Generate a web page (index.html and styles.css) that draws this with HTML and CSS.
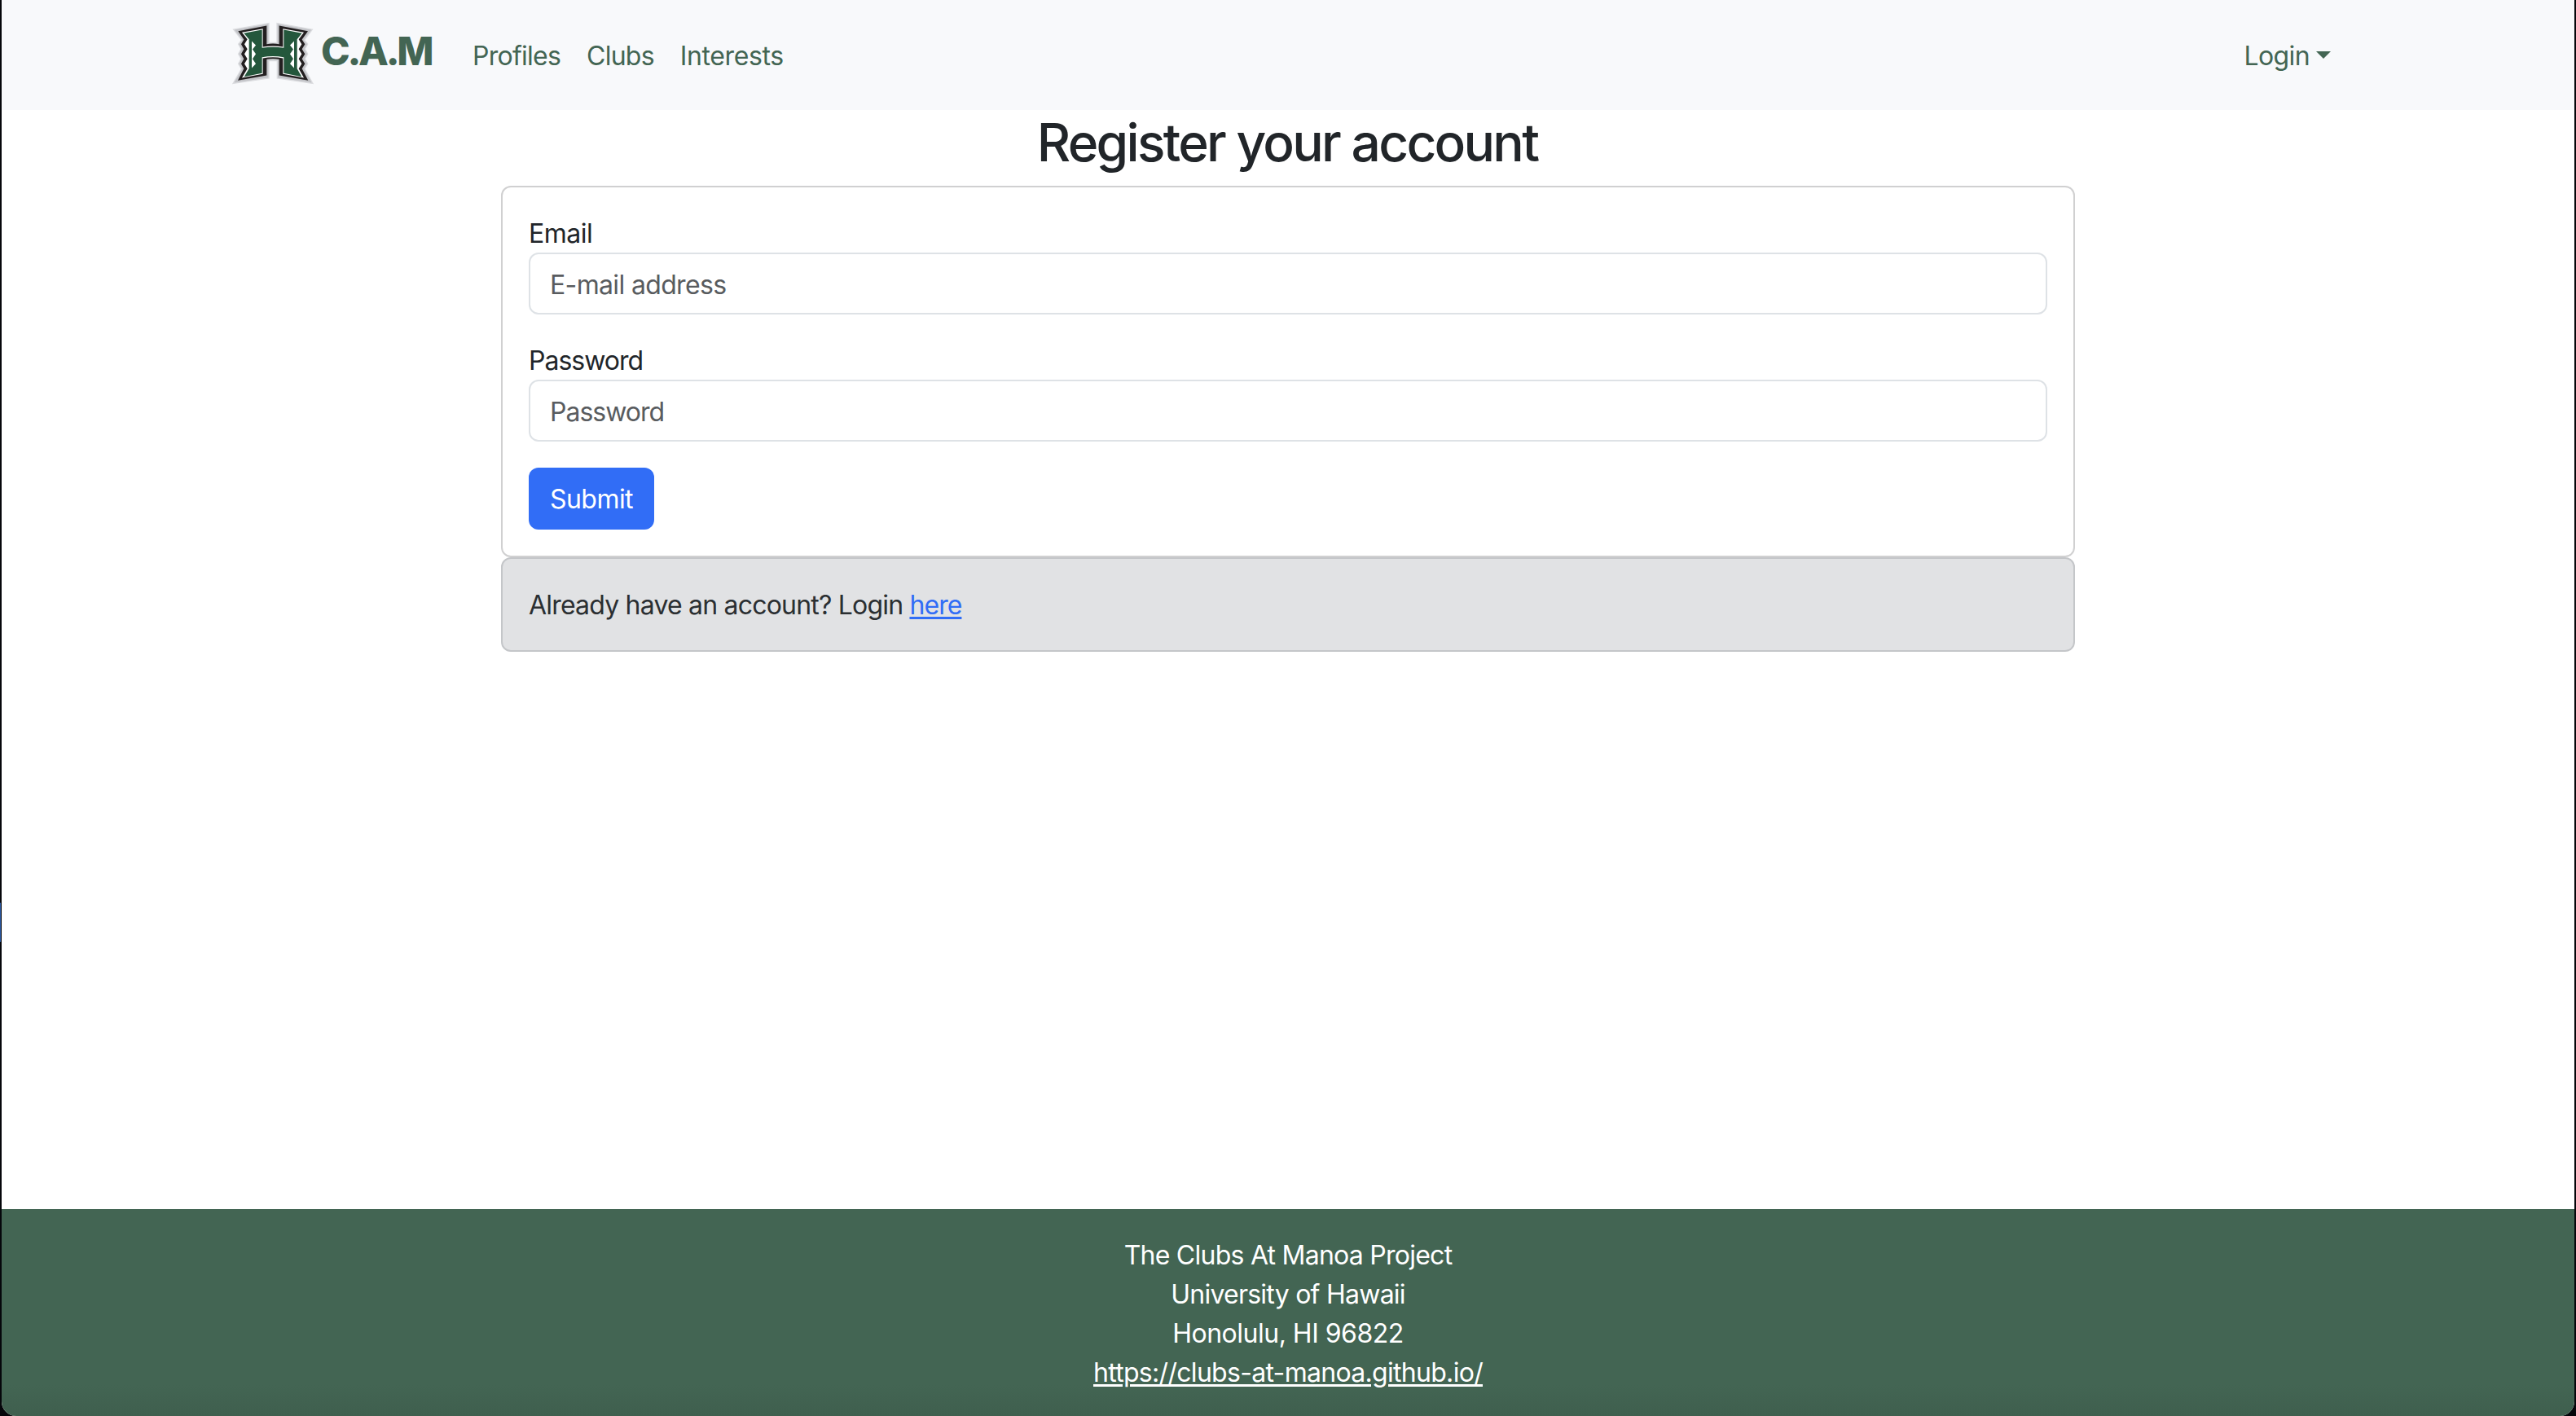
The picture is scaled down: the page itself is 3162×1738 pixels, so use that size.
FILE: index.html
```html
<!DOCTYPE html>
<html lang="en">
<head>
<meta charset="utf-8">
<title>C.A.M - Register</title>
<link rel="stylesheet" href="styles.css">
</head>
<body>
<div class="window">
  <nav class="navbar">
    <a class="brand" href="#">
      <svg class="brand-logo" viewBox="45 50 300 230" aria-hidden="true">
        <path class="logo-halo" d="M50 77 L180 54 V126 H210 V54 L340 77 L320 104 L311 116 L323 131 L313 149 L323 167 L313 185 L323 203 L312 222 L322 240 L342 276 L211 256 V192 H180 V256 L48 276 L69 240 L79 222 L68 203 L78 185 L68 167 L78 149 L68 131 L80 116 Z"/>
        <path class="logo-black" d="M67 83 L172 63 V131 Q195 127 218 131 V63 L324 83 L302 114 L313 131 L302 149 L313 167 L302 185 L313 203 L302 221 L325 265 L218 246 V187 Q195 182 172 187 V246 L66 265 L88 221 L78 203 L88 185 L78 167 L88 149 L78 131 L88 114 Z"/>
        <path class="logo-white" d="M81 88 L158 74 V141 Q195 135 232 141 V74 L309 88 L290 113 L301 131 L290 149 L301 167 L290 185 L301 203 L290 221 L309 255 L232 241 V183 Q195 176 158 183 V241 L81 255 L101 221 L90 203 L101 185 L90 167 L101 149 L90 131 L101 113 Z"/>
        <path class="logo-green" d="M88 91 L155 78 V145 Q195 138 235 145 V78 L302 91 L284 113 V221 L301 251 L235 238 V179 Q195 172 155 179 V238 L89 251 L107 221 V113 Z"/>
        <path class="logo-teeth" d="M117 120 L132 135 L120 150 L132 167 L120 185 L132 203 L117 219 Z M273 120 L258 135 L270 150 L258 167 L270 185 L258 203 L273 219 Z"/>
      </svg>
      <span class="brand-name">C.A.M</span>
    </a>
    <div class="nav-links">
      <a class="nav-link" href="#">Profiles</a>
      <a class="nav-link" href="#">Clubs</a>
      <a class="nav-link nav-link-wide" href="#">Interests</a>
    </div>
    <a class="nav-link login" href="#"><span>Login</span><span class="caret"></span></a>
  </nav>

  <main class="content">
    <h2 class="title">Register your account</h2>
    <form class="card">
      <label class="label" for="email">Email</label>
      <input class="input" id="email" type="email" placeholder="E-mail address">
      <label class="label label-tight" for="password">Password</label>
      <input class="input input-tight" id="password" type="password" placeholder="Password">
      <button class="submit" type="button">Submit</button>
    </form>
    <div class="card card-muted"><span>Already have an account? Login <a class="link" href="#">here</a></span></div>
  </main>

  <footer class="footer">
    <span>The Clubs At Manoa Project</span>
    <span>University of Hawaii</span>
    <span class="zip">Honolulu, HI 96822</span>
    <a class="footer-link" href="#">https://clubs-at-manoa.github.io/</a>
  </footer>
</div>
<div class="edge-accent"></div>
</body>
</html>
```
FILE: styles.css
```css
* { box-sizing: border-box; }

body {
  margin: 0;
  height: 1738px;
  overflow: hidden;
  padding: 0 2px;
  background: #05060a;
  color: #212529;
  font-family: Inter, "Liberation Sans", sans-serif;
  font-size: 32px;
  line-height: 48px;
  letter-spacing: -0.75px;
}

.window {
  display: flex;
  flex-direction: column;
  height: 1738px;
  background: #fff;
  border-radius: 0 0 18px 18px;
  overflow: hidden;
}

.navbar {
  display: flex;
  align-items: flex-start;
  height: 135px;
  padding: 27px 299px 0 283px;
  background: #f8f9fb;
}

.brand {
  display: flex;
  color: #436553;
  text-decoration: none;
}

.brand-logo { width: 100px; height: 77px; }
.logo-halo { fill: #c3c4c8; stroke: #dcdde0; stroke-width: 4; }
.logo-black { fill: #231f20; }
.logo-white, .logo-teeth { fill: #fff; }
.logo-green { fill: #24573c; }

.brand-name {
  width: 137px;
  margin-left: 9px;
  font-size: 48px;
  font-weight: 800;
  letter-spacing: -3.3px;
  line-height: 72px;
}

.nav-links {
  display: flex;
  gap: 32px;
  margin-left: 49px;
}

.nav-link {
  margin-top: 18px;
  color: #436553;
  text-decoration: none;
}

.nav-link-wide { letter-spacing: -0.4px; }

.login {
  display: flex;
  margin-left: auto;
  letter-spacing: -0.6px;
}

.caret {
  margin: 18px 0 0 8px;
  width: 18px;
  height: 9px;
  background: #436553;
  clip-path: polygon(0 0, 100% 0, 50% 100%);
}

.content {
  flex: 1;
  width: 1932px;
  margin: 0 auto;
}

.title {
  margin: 0 0 15px;
  padding: 1px 2px 0 0;
  font-size: 64px;
  font-weight: 550;
  line-height: 77px;
  letter-spacing: -2.7px;
  text-align: center;
}

.card {
  display: flex;
  flex-direction: column;
  padding: 32px;
  border: 2px solid #d0d0d1;
  border-radius: 12px;
}

.card-muted {
  height: 116px;
  padding-top: 33px;
  background: #e1e2e4;
  border-color: #c4c6c9;
  color: #2b2f32;
  letter-spacing: -0.8px;
}

.label {
  height: 48px;
  padding-top: 1px;
  letter-spacing: -0.5px;
}

.label-tight { letter-spacing: -1px; }

.input {
  height: 76px;
  margin: 0 0 32px;
  padding: 13px 24px 11px;
  border: 2px solid #dee2e6;
  border-radius: 12px;
  font: inherit;
  letter-spacing: -0.65px;
}

.input-tight { letter-spacing: -1px; }

.input::placeholder { color: #595c5f; opacity: 1; }

.submit {
  align-self: flex-start;
  width: 154px;
  height: 76px;
  padding: 2px 0 0;
  border: 0;
  border-radius: 12px;
  background: #316df6;
  color: #fff;
  font: inherit;
  letter-spacing: -0.55px;
}

.link {
  color: #316df6;
  letter-spacing: -0.95px;
  text-decoration-thickness: 3px;
  text-underline-offset: 3px;
}

.footer {
  display: flex;
  flex-direction: column;
  align-items: center;
  height: 254px;
  padding-top: 33px;
  background: linear-gradient(#436553 85%, #3f5f4e);
  color: #fff;
}

.zip { letter-spacing: -0.5px; }

.footer-link {
  color: #fff;
  letter-spacing: -0.7px;
  text-decoration-thickness: 3px;
  text-underline-offset: 3px;
}

.edge-accent {
  position: absolute;
  left: 0;
  top: 1108px;
  width: 1px;
  height: 48px;
  background: #2c5ca8;
}
```
